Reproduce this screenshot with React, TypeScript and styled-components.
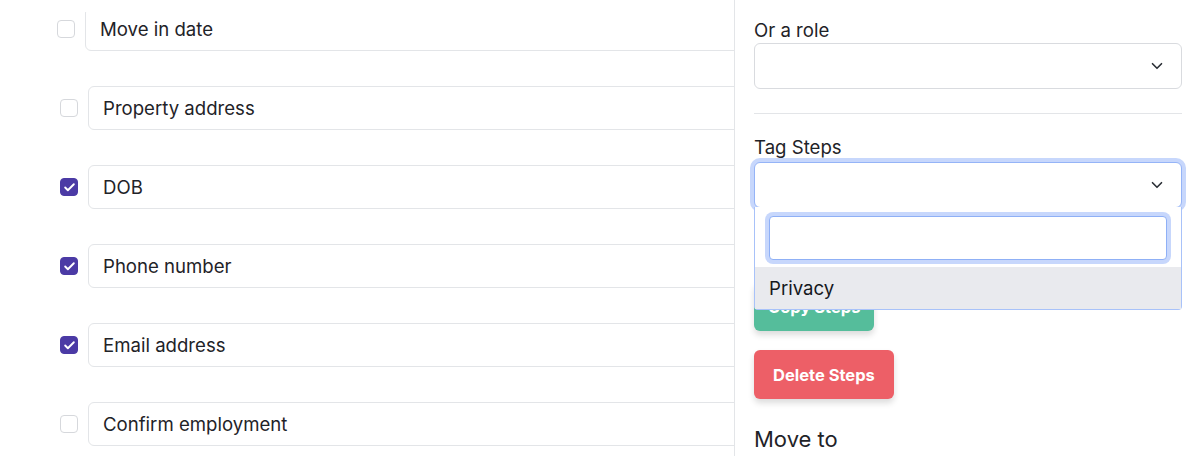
import React from 'react'
import styled, { createGlobalStyle } from 'styled-components'
import { ChevronDown, Check } from 'lucide-react'

const GlobalStyle = createGlobalStyle`
  html, body {
    margin: 0;
    padding: 0;
    background: #ffffff;
    font-family: Inter, "Noto Sans", sans-serif;
    color: #1f2328;
  }
  * { box-sizing: border-box; }
`

const Page = styled.div`
  display: flex;
  width: 1200px;
  height: 456px;
  overflow: hidden;
`

const StepList = styled.div`
  flex: 1;
  overflow: hidden;
  padding: 7px 0 0 60px;
  display: flex;
  flex-direction: column;
  gap: 35px;
`

const StepRow = styled.div<{ $lifted?: boolean }>`
  display: flex;
  align-items: center;
  gap: 10px;
  height: 44px;
  margin-left: ${(p) => (p.$lifted ? '-3px' : '0')};
`

const CheckBox = styled.span<{ $checked?: boolean }>`
  flex: none;
  width: 18px;
  height: 18px;
  border-radius: 4px;
  border: 1px solid ${(p) => (p.$checked ? '#4b3aa5' : '#d6d8dc')};
  background: ${(p) => (p.$checked ? '#4b3aa5' : '#ffffff')};
  display: flex;
  align-items: center;
  justify-content: center;
  color: #ffffff;
`

const StepInput = styled.div<{ $lifted?: boolean }>`
  flex: none;
  width: calc(100% + 40px);
  height: 44px;
  border: 1px solid #e3e5e8;
  border-radius: 6px;
  padding: 0 14px;
  display: flex;
  align-items: center;
  font-size: 18.6px;
  color: #1f2328;
  background: #ffffff;
  clip-path: ${(p) => (p.$lifted ? 'inset(5px -2px -2px -2px)' : 'none')};
`

const Panel = styled.aside`
  flex: none;
  width: 466px;
  border-left: 1px solid #e3e5e8;
  background: #ffffff;
  padding: 18px 18px 0 19px;
  display: flex;
  flex-direction: column;
  align-items: flex-start;
`

const Label = styled.div<{ $gap?: number }>`
  font-size: 18.6px;
  line-height: 24px;
  color: #1f2328;
  margin-bottom: ${(p) => p.$gap ?? 1}px;
`

const Field = styled.div`
  position: relative;
  width: 100%;
`

const SelectBox = styled.div<{ $focused?: boolean }>`
  width: 100%;
  height: 46px;
  border: 1px solid ${(p) => (p.$focused ? '#95b4f7' : '#d9dbdf')};
  border-radius: 6px;
  box-shadow: ${(p) => (p.$focused ? '0 0 0 4px #c7d7fc' : 'none')};
  display: flex;
  align-items: center;
  justify-content: flex-end;
  padding-right: 15px;
  color: #2b2f36;
  background: #ffffff;
`

const Divider = styled.hr`
  width: 100%;
  border: none;
  border-top: 1px solid #e3e5e8;
  margin: 24px 0 21px;
`

const Menu = styled.div`
  position: absolute;
  top: 45px;
  left: 0;
  right: 0;
  background: #ffffff;
  border: 1px solid #a8c2f9;
  border-top: none;
  border-radius: 0 0 4px 4px;
  padding-top: 9px;
  z-index: 2;
`

const SearchWrap = styled.div`
  padding: 0 14px 7px 14px;
`

const SearchInput = styled.div`
  height: 44px;
  border: 1px solid #8fb0f6;
  border-radius: 4px;
  box-shadow: 0 0 0 4px #c7d7fc;
  background: #ffffff;
`

const Option = styled.div`
  height: 42px;
  display: flex;
  align-items: center;
  padding-left: 14px;
  font-size: 18.6px;
  background: #e9eaee;
  color: #15181d;
`

const ActionButton = styled.button<{ $tone: 'green' | 'red'; $top: number; $pad: number }>`
  height: 49px;
  padding: 0 ${(p) => p.$pad}px;
  margin-top: ${(p) => p.$top}px;
  border: none;
  border-radius: 6px;
  background: ${(p) => (p.$tone === 'green' ? '#55bd9b' : '#ed5f67')};
  color: #ffffff;
  font-family: Inter, "Noto Sans", sans-serif;
  font-size: 16.5px;
  font-weight: 700;
  box-shadow: 0 4px 6px rgba(0, 0, 0, 0.14);
`

const SectionTitle = styled.div`
  margin-top: 26px;
  font-size: 22px;
  line-height: 28px;
  color: #1f2328;
`

const steps = [
  { name: 'Move in date', checked: false },
  { name: 'Property address', checked: false },
  { name: 'DOB', checked: true },
  { name: 'Phone number', checked: true },
  { name: 'Email address', checked: true },
  { name: 'Confirm employment', checked: false },
]

const App = () => {
  return (
    <>
      <GlobalStyle />
      <Page>
        <StepList>
          {steps.map((s, i) => (
            <StepRow key={s.name} $lifted={i === 0}>
              <CheckBox $checked={s.checked}>
                {s.checked && <Check size={13} strokeWidth={3.5} />}
              </CheckBox>
              <StepInput $lifted={i === 0}>{s.name}</StepInput>
            </StepRow>
          ))}
        </StepList>
        <Panel>
          <Label>Or a role</Label>
          <SelectBox>
            <ChevronDown size={18} strokeWidth={2.2} />
          </SelectBox>
          <Divider />
          <Label $gap={3}>Tag Steps</Label>
          <Field>
            <SelectBox $focused>
              <ChevronDown size={18} strokeWidth={2.2} />
            </SelectBox>
            <Menu>
              <SearchWrap>
                <SearchInput />
              </SearchWrap>
              <Option>Privacy</Option>
            </Menu>
          </Field>
          <ActionButton $tone="green" $top={74} $pad={14}>Copy Steps</ActionButton>
          <ActionButton $tone="red" $top={19} $pad={19}>Delete Steps</ActionButton>
          <SectionTitle>Move to</SectionTitle>
        </Panel>
      </Page>
    </>
  )
}

export default App
